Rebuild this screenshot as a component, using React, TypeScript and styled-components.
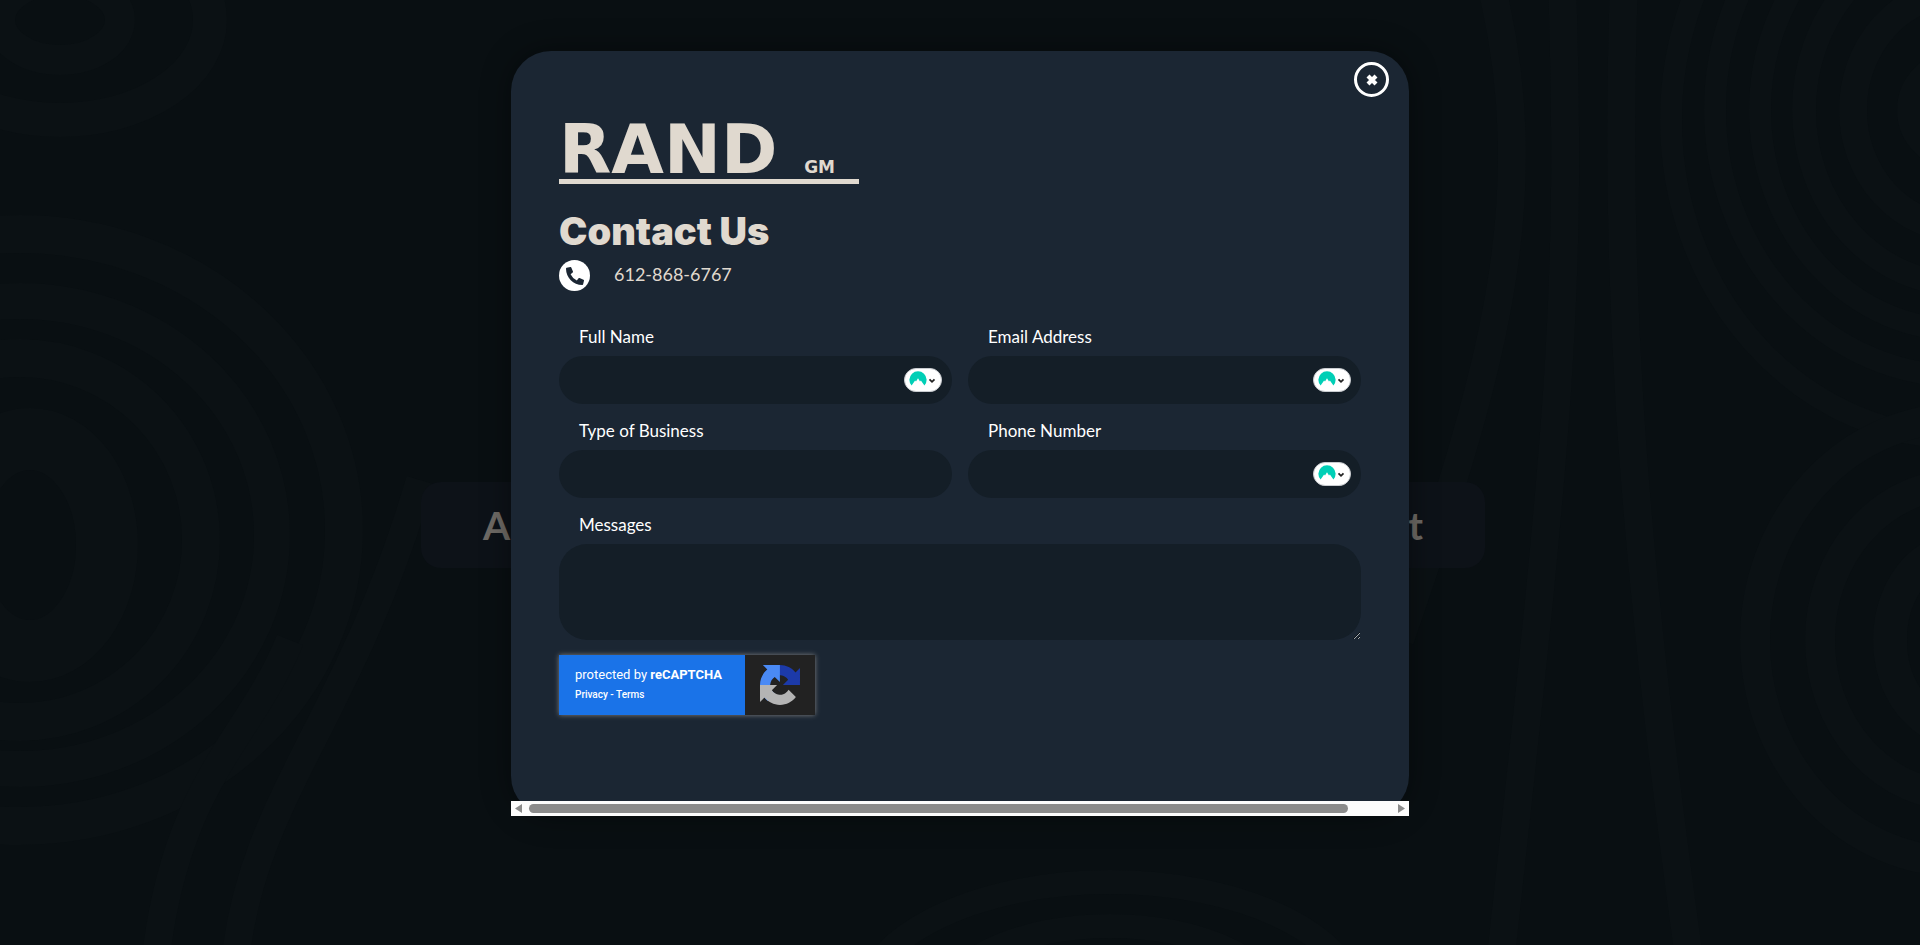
import React, { useId } from "react";
import styled, { createGlobalStyle } from "styled-components";
import { FaPhoneAlt } from "react-icons/fa";

const GlobalStyle = createGlobalStyle`
  *, *::before, *::after { box-sizing: border-box; }
  body {
    margin: 0;
    background: #090f12;
    color: #ffffff;
    font-family: Lato, "Open Sans", sans-serif;
    font-size: 17px;
    line-height: 24px;
  }
`;

const Page = styled.div`
  position: relative;
  min-height: 100vh;
  padding: 51px 24px 128px;
  overflow: hidden;
`;

const Waves = styled.svg`
  position: absolute;
  inset: 0;
  width: 100%;
  height: 100%;
`;

const Banner = styled.div`
  position: absolute;
  top: 482px;
  left: calc(50% - 539px);
  width: 1064px;
  height: 86px;
  padding: 0 62px;
  display: flex;
  align-items: center;
  justify-content: space-between;
  border-radius: 20px;
  background: #0d1218;
  color: #6e6a65;
  font-size: 39px;
  font-weight: 700;
  line-height: 48px;
`;

const Dialog = styled.section`
  position: relative;
  max-width: 898px;
  min-height: 765px;
  margin: 0 auto;
  padding: 78px 48px 100px;
  border-radius: 40px;
  background: #1b2633;
  box-shadow: 0 0 30px rgba(0, 0, 0, 0.4);
`;

const CloseButton = styled.button`
  position: absolute;
  top: 11px;
  right: 20px;
  width: 35px;
  height: 35px;
  padding: 0;
  display: grid;
  place-items: center;
  border: 3px solid #ffffff;
  border-radius: 50%;
  background: transparent;
  cursor: pointer;
`;

const Logo = styled.div`
  width: 300px;
  height: 55px;
  border-bottom: 5px solid #e0d9cf;
  color: #e0d9cf;
  font-family: "DejaVu Sans", sans-serif;
  font-weight: 700;
`;

const Wordmark = styled.div`
  width: 276px;
  display: flex;
  align-items: baseline;
  justify-content: space-between;
  font-size: 68px;
  line-height: 42px;
`;

const WordmarkSuffix = styled.span`
  font-size: 17px;
`;

const Title = styled.h1`
  margin: 23px 0 5px;
  color: #e0d9cf;
  font-family: Inter, Lato, sans-serif;
  font-size: 38px;
  font-weight: 900;
  line-height: 48px;
`;

const PhoneLink = styled.a`
  width: fit-content;
  display: flex;
  gap: 24px;
  color: #e0d9cf;
  font-size: 18px;
  line-height: 28px;
  text-decoration: none;
`;

const PhoneBadge = styled.span`
  width: 31px;
  height: 31px;
  display: grid;
  place-items: center;
  border-radius: 50%;
  background: #ffffff;
  color: #1b2633;
`;

const Form = styled.form`
  margin-top: 34px;
  display: grid;
  grid-template-columns: 1fr 1fr;
  gap: 15px 16px;
`;

const Field = styled.div<{ $wide?: boolean }>`
  grid-column: ${(p) => (p.$wide ? "1 / -1" : "auto")};
  display: flex;
  flex-direction: column;
  gap: 7px;
`;

const Label = styled.label`
  padding-left: 20px;
`;

const Control = styled.div`
  display: flex;
  align-items: center;
  height: 48px;
  padding-right: 10px;
  border-radius: 24px;
  background: #141e27;
`;

const Input = styled.input`
  flex: 1;
  min-width: 0;
  height: 48px;
  padding: 0 20px;
  border: 0;
  outline: 0;
  background: transparent;
  color: #ffffff;
  font: inherit;
`;

const TextArea = styled.textarea`
  display: block;
  width: 100%;
  height: 96px;
  padding: 12px 20px;
  border: 0;
  border-radius: 28px;
  outline: 0;
  background: #141e27;
  color: #ffffff;
  color-scheme: dark;
  font: inherit;
  resize: vertical;
`;

const FillButton = styled.button`
  width: 38px;
  height: 24px;
  padding: 0;
  display: grid;
  place-items: center;
  border: 1px solid #c9ccd0;
  border-radius: 12px;
  background: #ffffff;
  cursor: pointer;
`;

const Captcha = styled.div`
  width: 256px;
  height: 60px;
  margin-top: 15px;
  display: flex;
  box-shadow: 0 0 5px #808080;
  background: #222222;
  font-family: Roboto, sans-serif;
`;

const CaptchaText = styled.div`
  width: 186px;
  padding: 10px 16px;
  background: #1a73e8;
  font-size: 13px;
  line-height: 20px;
  white-space: nowrap;
`;

const CaptchaLinks = styled.div`
  font-size: 10px;
  font-weight: 500;

  a {
    color: inherit;
    text-decoration: none;
  }
`;

const CaptchaMark = styled.div`
  flex: 1;
  display: grid;
  place-items: center;
`;

const ScrollBar = styled.div`
  position: absolute;
  left: 0;
  right: 0;
  bottom: 0;
  height: 15px;
  padding: 0 4px;
  display: flex;
  align-items: center;
  justify-content: space-between;
  background: #fcfcfc;
`;

const ScrollTrack = styled.div`
  flex: 1;
  margin: 0 7px;
`;

const ScrollThumb = styled.div`
  width: 95%;
  height: 9px;
  border-radius: 5px;
  background: #8b8b8b;
`;

// Each ring: centre x, centre y, horizontal radius, vertical radius, band width.
const rings = [
  [1960, 110, 48, 46, 30],
  [1960, 110, 107, 118, 28],
  [1960, 110, 156, 174, 24],
  [1960, 110, 200, 220, 22],
  [1960, 110, 245, 266, 22],
  [1960, 120, 289, 318, 22],
  [30, 545, 77, 106, 62],
  [20, 540, 181, 182, 38],
  [20, 535, 252, 234, 36],
  [20, 530, 324, 296, 38],
  [1960, 640, 70, 90, 34],
  [1960, 640, 140, 156, 30],
  [1960, 640, 205, 222, 30],
  [1110, 1010, 90, 40, 22],
  [1110, 1010, 170, 84, 24],
  [1110, 1010, 250, 128, 24],
  [60, 20, 60, 40, 30],
  [60, 20, 150, 100, 34],
];

const bands = [
  "M1624 -20C1614 260 1628 520 1690 965",
  "M1562 -20C1572 300 1560 420 1500 965",
  "M1490 -20C1545 200 1490 380 1400 640",
  "M155 965C175 780 250 740 290 640",
  "M235 965C250 800 350 720 420 480",
];

function WaveBackground() {
  return (
    <Waves
      viewBox="0 0 1920 945"
      preserveAspectRatio="xMidYMid slice"
      fill="none"
      stroke="#0b1114"
      aria-hidden="true"
    >
      {rings.map(([cx, cy, rx, ry, width], i) => (
        <ellipse key={i} cx={cx} cy={cy} rx={rx} ry={ry} strokeWidth={width} />
      ))}
      {bands.map((d) => (
        <path key={d} d={d} strokeWidth={28} />
      ))}
    </Waves>
  );
}

function AutofillButton() {
  return (
    <FillButton type="button" aria-label="Autofill">
      <svg width="36" height="22" viewBox="0 0 36 22" aria-hidden="true">
        <path
          d="M6.6 16.6A8.6 8.6 0 1 1 19.4 16.6L15.9 11.4L15 12.4L13 9.2L11 12.4L10.1 11.4Z"
          fill="#00cfb6"
        />
        <path d="M24.5 10.4L27 12.8L29.5 10.4" fill="none" stroke="#222222" strokeWidth="1.8" />
      </svg>
    </FillButton>
  );
}

type TextFieldProps = { label: string; name: string; type?: string; autofill?: boolean };

function TextField({ label, name, type = "text", autofill }: TextFieldProps) {
  const id = useId();
  return (
    <Field>
      <Label htmlFor={id}>{label}</Label>
      <Control>
        <Input id={id} name={name} type={type} />
        {autofill && <AutofillButton />}
      </Control>
    </Field>
  );
}

function CaptchaBadge() {
  return (
    <Captcha>
      <CaptchaText>
        <div>
          protected by <strong>reCAPTCHA</strong>
        </div>
        <CaptchaLinks>
          <a href="#privacy">Privacy</a> - <a href="#terms">Terms</a>
        </CaptchaLinks>
      </CaptchaText>
      <CaptchaMark>
        <svg width="40" height="40" viewBox="0 0 64 64" aria-hidden="true">
          <path
            fill="#1c3aa9"
            d="M64 31.955l-.033-1.37V4.687l-7.16 7.16C50.948 4.674 42.033.093 32.05.093c-10.4 0-19.622 4.96-25.458 12.64l11.736 11.86a15.55 15.55 0 0 1 4.754-5.334c2.05-1.6 4.952-2.906 8.968-2.906.485 0 .86.057 1.135.163 4.976.393 9.288 3.14 11.828 7.124l-8.307 8.307L64 31.953"
          />
          <path
            fill="#4a8af5"
            d="M31.862.094l-1.37.033H4.594l7.16 7.16C4.58 13.147 0 22.06 0 32.046c0 10.4 4.96 19.622 12.64 25.458L24.5 45.768a15.55 15.55 0 0 1-5.334-4.754c-1.6-2.05-2.906-4.952-2.906-8.968 0-.485.057-.86.163-1.135.393-4.976 3.14-9.288 7.124-11.828l8.307 8.307L31.86.095"
          />
          <path
            fill="#b4b4b4"
            d="M.001 32.045l.033 1.37v25.898l7.16-7.16c5.86 7.173 14.774 11.754 24.76 11.754 10.4 0 19.622-4.96 25.458-12.64l-11.736-11.86a15.55 15.55 0 0 1-4.754 5.334c-2.05 1.6-4.952 2.906-8.968 2.906-.485 0-.86-.057-1.135-.163-4.976-.393-9.288-3.14-11.828-7.124l8.307-8.307c-10.522.04-22.4.066-27.295-.005"
          />
        </svg>
      </CaptchaMark>
    </Captcha>
  );
}

export default function App() {
  return (
    <>
      <GlobalStyle />
      <Page>
        <WaveBackground />
        <Banner aria-hidden="true">
          <span>A</span>
          <span>t</span>
        </Banner>
        <Dialog role="dialog" aria-labelledby="contact-title">
          <CloseButton type="button" aria-label="Close">
            <svg width="14" height="14" viewBox="0 0 14 14" aria-hidden="true">
              <path d="M3 3L11 11M11 3L3 11" stroke="#ffffff" strokeWidth="4.2" />
            </svg>
          </CloseButton>
          <Logo>
            <Wordmark>
              RAND<WordmarkSuffix>GM</WordmarkSuffix>
            </Wordmark>
          </Logo>
          <Title id="contact-title">Contact Us</Title>
          <PhoneLink href="tel:6128686767">
            <PhoneBadge>
              <FaPhoneAlt size={18} aria-hidden="true" />
            </PhoneBadge>
            612-868-6767
          </PhoneLink>
          <Form>
            <TextField label="Full Name" name="name" autofill />
            <TextField label="Email Address" name="email" type="email" autofill />
            <TextField label="Type of Business" name="business" />
            <TextField label="Phone Number" name="phone" type="tel" autofill />
            <Field $wide>
              <Label htmlFor="messages">Messages</Label>
              <TextArea id="messages" name="messages" />
            </Field>
          </Form>
          <CaptchaBadge />
          <ScrollBar aria-hidden="true">
            <svg width="7" height="9" viewBox="0 0 7 9">
              <path d="M7 0V9L0 4.5Z" fill="#8b8b8b" />
            </svg>
            <ScrollTrack>
              <ScrollThumb />
            </ScrollTrack>
            <svg width="7" height="9" viewBox="0 0 7 9">
              <path d="M0 0V9L7 4.5Z" fill="#8b8b8b" />
            </svg>
          </ScrollBar>
        </Dialog>
      </Page>
    </>
  );
}
